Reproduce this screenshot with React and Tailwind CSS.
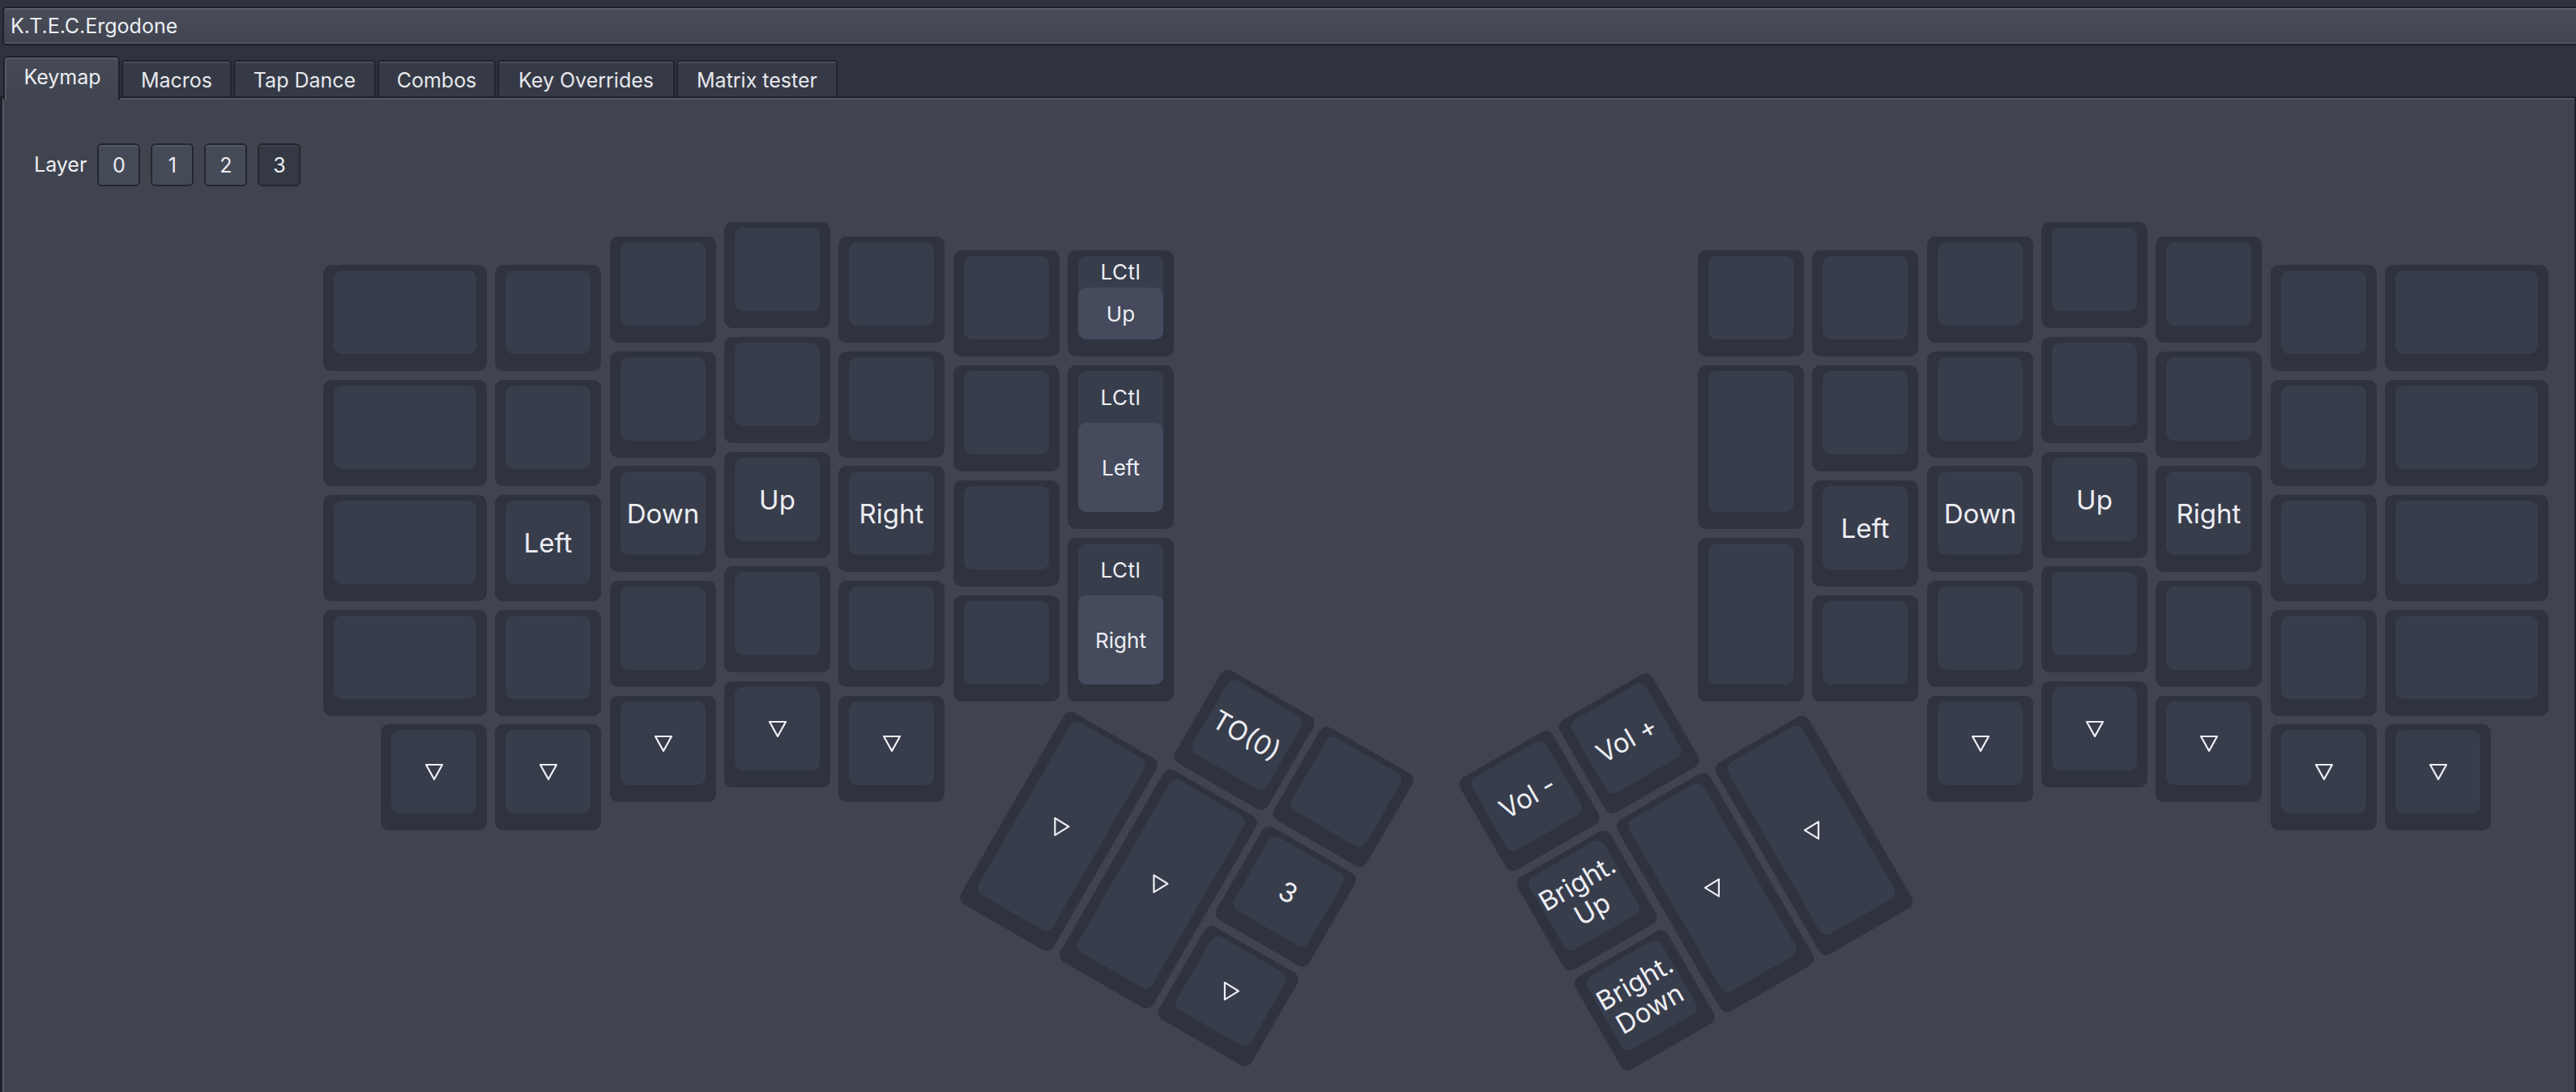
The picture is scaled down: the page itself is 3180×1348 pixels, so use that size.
import React from "react";

const U = 141.4;
const UY = 141.8;
const UT = 141.6;
const GAP = 10;
// canvas origin is page (5, 250)
const X0 = 399 - 5;
const Y0 = 274 - 250;
const YT = 272 - 250;

const mainKeys = [
  // left half
  { x: 0, y: 0.375, w: 1.5 },
  { x: 0, y: 1.375, w: 1.5 },
  { x: 0, y: 2.375, w: 1.5 },
  { x: 0, y: 3.375, w: 1.5 },
  { x: 0.5, y: 4.375, tri: "down" },
  { x: 1.5, y: 0.375 },
  { x: 1.5, y: 1.375 },
  { x: 1.5, y: 2.375, label: "Left" },
  { x: 1.5, y: 3.375 },
  { x: 1.5, y: 4.375, tri: "down" },
  { x: 2.5, y: 0.125 },
  { x: 2.5, y: 1.125 },
  { x: 2.5, y: 2.125, label: "Down" },
  { x: 2.5, y: 3.125 },
  { x: 2.5, y: 4.125, tri: "down" },
  { x: 3.5, y: 0 },
  { x: 3.5, y: 1 },
  { x: 3.5, y: 2, label: "Up" },
  { x: 3.5, y: 3 },
  { x: 3.5, y: 4, tri: "down" },
  { x: 4.5, y: 0.125 },
  { x: 4.5, y: 1.125 },
  { x: 4.5, y: 2.125, label: "Right" },
  { x: 4.5, y: 3.125 },
  { x: 4.5, y: 4.125, tri: "down" },
  { x: 5.5, y: 0.25 },
  { x: 5.5, y: 1.25 },
  { x: 5.5, y: 2.25 },
  { x: 5.5, y: 3.25 },
  { x: 6.5, y: 0.25, mt: ["LCtl", "Up"] },
  { x: 6.5, y: 1.25, h: 1.5, mt: ["LCtl", "Left"] },
  { x: 6.5, y: 2.75, h: 1.5, mt: ["LCtl", "Right"] },
  // right half
  { x: 12, y: 0.25 },
  { x: 12, y: 1.25, h: 1.5 },
  { x: 12, y: 2.75, h: 1.5 },
  { x: 13, y: 0.25 },
  { x: 13, y: 1.25 },
  { x: 13, y: 2.25, label: "Left" },
  { x: 13, y: 3.25 },
  { x: 14, y: 0.125 },
  { x: 14, y: 1.125 },
  { x: 14, y: 2.125, label: "Down" },
  { x: 14, y: 3.125 },
  { x: 14, y: 4.125, tri: "down" },
  { x: 15, y: 0 },
  { x: 15, y: 1 },
  { x: 15, y: 2, label: "Up" },
  { x: 15, y: 3 },
  { x: 15, y: 4, tri: "down" },
  { x: 16, y: 0.125 },
  { x: 16, y: 1.125 },
  { x: 16, y: 2.125, label: "Right" },
  { x: 16, y: 3.125 },
  { x: 16, y: 4.125, tri: "down" },
  { x: 17, y: 0.375 },
  { x: 17, y: 1.375 },
  { x: 17, y: 2.375 },
  { x: 17, y: 3.375 },
  { x: 17, y: 4.375, tri: "down" },
  { x: 18, y: 0.375, w: 1.5 },
  { x: 18, y: 1.375, w: 1.5 },
  { x: 18, y: 2.375, w: 1.5 },
  { x: 18, y: 3.375, w: 1.5 },
  { x: 18, y: 4.375, tri: "down" },
];

const leftThumb = {
  rx: 6.5,
  ry: 4.25,
  keys: [
    { x: 7.5, y: 3.25, label: "TO(0)" },
    { x: 8.5, y: 3.25 },
    { x: 6.5, y: 4.25, h: 2, tri: "right" },
    { x: 7.5, y: 4.25, h: 2, tri: "right" },
    { x: 8.5, y: 4.25, label: "3" },
    { x: 8.5, y: 5.25, tri: "right" },
  ],
};

const rightThumb = {
  rx: 13,
  ry: 4.25,
  keys: [
    { x: 10, y: 3.25, label: "Vol -" },
    { x: 11, y: 3.25, label: "Vol +" },
    { x: 10, y: 4.25, label: "Bright.\nUp" },
    { x: 11, y: 4.25, h: 2, tri: "left" },
    { x: 12, y: 4.25, h: 2, tri: "left" },
    { x: 10, y: 5.25, label: "Bright.\nDown" },
  ],
};

function Triangle({ dir }) {
  if (dir === "down") {
    return (
      <svg width="24" height="22" viewBox="0 0 24 22" className="block">
        <polygon points="2,2 22,2 12,20" fill="none" stroke="#eef0f4" strokeWidth="2.2" strokeLinejoin="round" />
      </svg>
    );
  }
  if (dir === "right") {
    return (
      <svg width="21" height="25" viewBox="0 0 21 25" className="block">
        <polygon points="2,2 2,23 19,12.5" fill="none" stroke="#eef0f4" strokeWidth="2.2" strokeLinejoin="round" />
      </svg>
    );
  }
  return (
    <svg width="21" height="25" viewBox="0 0 21 25" className="block">
      <polygon points="19,2 19,23 2,12.5" fill="none" stroke="#eef0f4" strokeWidth="2.2" strokeLinejoin="round" />
    </svg>
  );
}

function KeyCap({ k, left, top, counter, unit }) {
  const w = (k.w || 1) * unit - GAP;
  const h = (k.h || 1) * unit - GAP;
  const maskTop = 0.35 * h - 7;
  return (
    <div
      className="absolute rounded-[10px] bg-[#2f333f]"
      style={{ left, top, width: Math.round(w), height: Math.round(h) }}
    >
      <div className="absolute left-[13px] right-[13px] top-[7px] bottom-[21px] rounded-[10px] bg-[#383d4c] text-[#eceef2]">
        {k.mt ? (
          <>
            <div
              className="absolute left-0 right-0 top-0 flex items-center justify-center pt-[2px] text-[26px] leading-none tracking-[0.5px]"
              style={{ height: maskTop }}
            >
              {k.mt[0]}
            </div>
            <div
              className="absolute left-0 right-0 bottom-0 rounded-[10px] bg-[#454b5d] flex items-center justify-center pt-[2px] text-[26px] leading-none"
              style={{ top: maskTop }}
            >
              {k.mt[1]}
            </div>
          </>
        ) : (
          <div className="absolute inset-0 flex items-center justify-center">
            {k.tri ? (
              <div className={counter === "cw" ? "rotate-30" : counter === "ccw" ? "-rotate-30" : ""}>
                <Triangle dir={k.tri} />
              </div>
            ) : k.label ? (
              <span className="pt-[2px] text-[33px] leading-[37px] text-center whitespace-pre-line">{k.label}</span>
            ) : null}
          </div>
        )}
      </div>
    </div>
  );
}

function ThumbCluster({ cluster, dir }) {
  const ox = X0 + cluster.rx * U;
  const oy = YT + cluster.ry * UY;
  return (
    <div
      className={
        "absolute w-0 h-0 origin-top-left " + (dir === "cw" ? "rotate-30" : "-rotate-30")
      }
      style={{ left: ox, top: oy }}
    >
      {cluster.keys.map((k, i) => (
        <KeyCap
          key={i}
          k={k}
          unit={UT}
          left={(k.x - cluster.rx) * UT}
          top={(k.y - cluster.ry) * UT}
          counter={dir === "cw" ? "ccw" : "cw"}
        />
      ))}
    </div>
  );
}

function Tab({ label, w, selected }) {
  if (selected) {
    return (
      <div
        className={
          "relative z-10 -mb-[4px] h-[54px] rounded-t-[6px] border-2 border-b-0 border-[#1f2129] bg-[#40444f] " + w
        }
      >
        <div className="h-full rounded-t-[4px] border-t-2 border-l-2 border-[#555a67] bg-gradient-to-b from-[#464a57] to-[#40444f] flex items-center justify-center text-[25px] text-[#eceef2] pb-[4px]">
          {label}
        </div>
      </div>
    );
  }
  return (
    <div className={"h-[45px] rounded-t-[5px] border-2 border-b-0 border-[#22242b] " + w}>
      <div className="h-full rounded-t-[3px] border-t-2 border-[#4a4e5a] bg-[#363a46] flex items-center justify-center text-[25px] text-[#e6e8ed] pt-[2px]">
        {label}
      </div>
    </div>
  );
}

function LayerButton({ n, active }) {
  return (
    <div className="w-[53px] h-[53px] rounded-[6px] border-2 border-[#24262d]">
      <div
        className={
          "w-full h-full rounded-[4px] border-t-2 flex items-center justify-center text-[25px] text-[#eceef2] " +
          (active ? "bg-[#353944] border-[#3d414c]" : "bg-[#454a57] border-[#525765]")
        }
      >
        {n}
      </div>
    </div>
  );
}

export default function App() {
  return (
    <div className="w-[3180px] h-[1348px] overflow-hidden bg-[#2f3340] flex flex-col font-['Inter',sans-serif] text-[#eceef2]">
      <div className="h-[8px] shrink-0 bg-[#30333f]" />
      {/* keyboard selector */}
      <div className="shrink-0 h-[48px] ml-[3px] -mr-[12px] rounded-[5px] border-2 border-[#1e2027]">
        <div className="h-full rounded-[3px] border-t-2 border-b-2 border-t-[#5b5f6b] border-b-[#50545f] bg-gradient-to-b from-[#494d59] to-[#40444f] flex items-center pl-[8px] pt-[2px] text-[25px] text-[#eceef2]">
          K.T.E.C.Ergodone
        </div>
      </div>
      {/* tabs */}
      <div className="shrink-0 mt-[13px] h-[50px] flex items-end gap-[2px] pl-[4px]">
        <Tab label="Keymap" w="w-[144px]" selected />
        <Tab label="Macros" w="w-[136px]" />
        <Tab label="Tap Dance" w="w-[176px]" />
        <Tab label="Combos" w="w-[146px]" />
        <Tab label="Key Overrides" w="w-[219px]" />
        <Tab label="Matrix tester" w="w-[199px]" />
      </div>
      {/* panel */}
      <div className="flex-1 min-h-0 border-t-2 border-l-[3px] border-r-[2px] border-[#1f2129]">
        <div className="h-full border-t-2 border-l-2 border-[#535865] bg-[#40444f] flex flex-col">
          <div className="shrink-0 mt-[54px] h-[53px] flex items-center gap-[13px] pl-[37px]">
            <span className="text-[25px] text-[#eceef2]">Layer</span>
            <LayerButton n="0" />
            <LayerButton n="1" />
            <LayerButton n="2" />
            <LayerButton n="3" active />
          </div>
          <div className="relative mt-[20px] flex-1">
            {mainKeys.map((k, i) => (
              <KeyCap
                key={i}
                k={k}
                unit={U}
                left={Math.round(X0 + k.x * U)}
                top={Math.round(Y0 + k.y * UY)}
              />
            ))}
            <ThumbCluster cluster={leftThumb} dir="cw" />
            <ThumbCluster cluster={rightThumb} dir="ccw" />
          </div>
        </div>
      </div>
    </div>
  );
}
